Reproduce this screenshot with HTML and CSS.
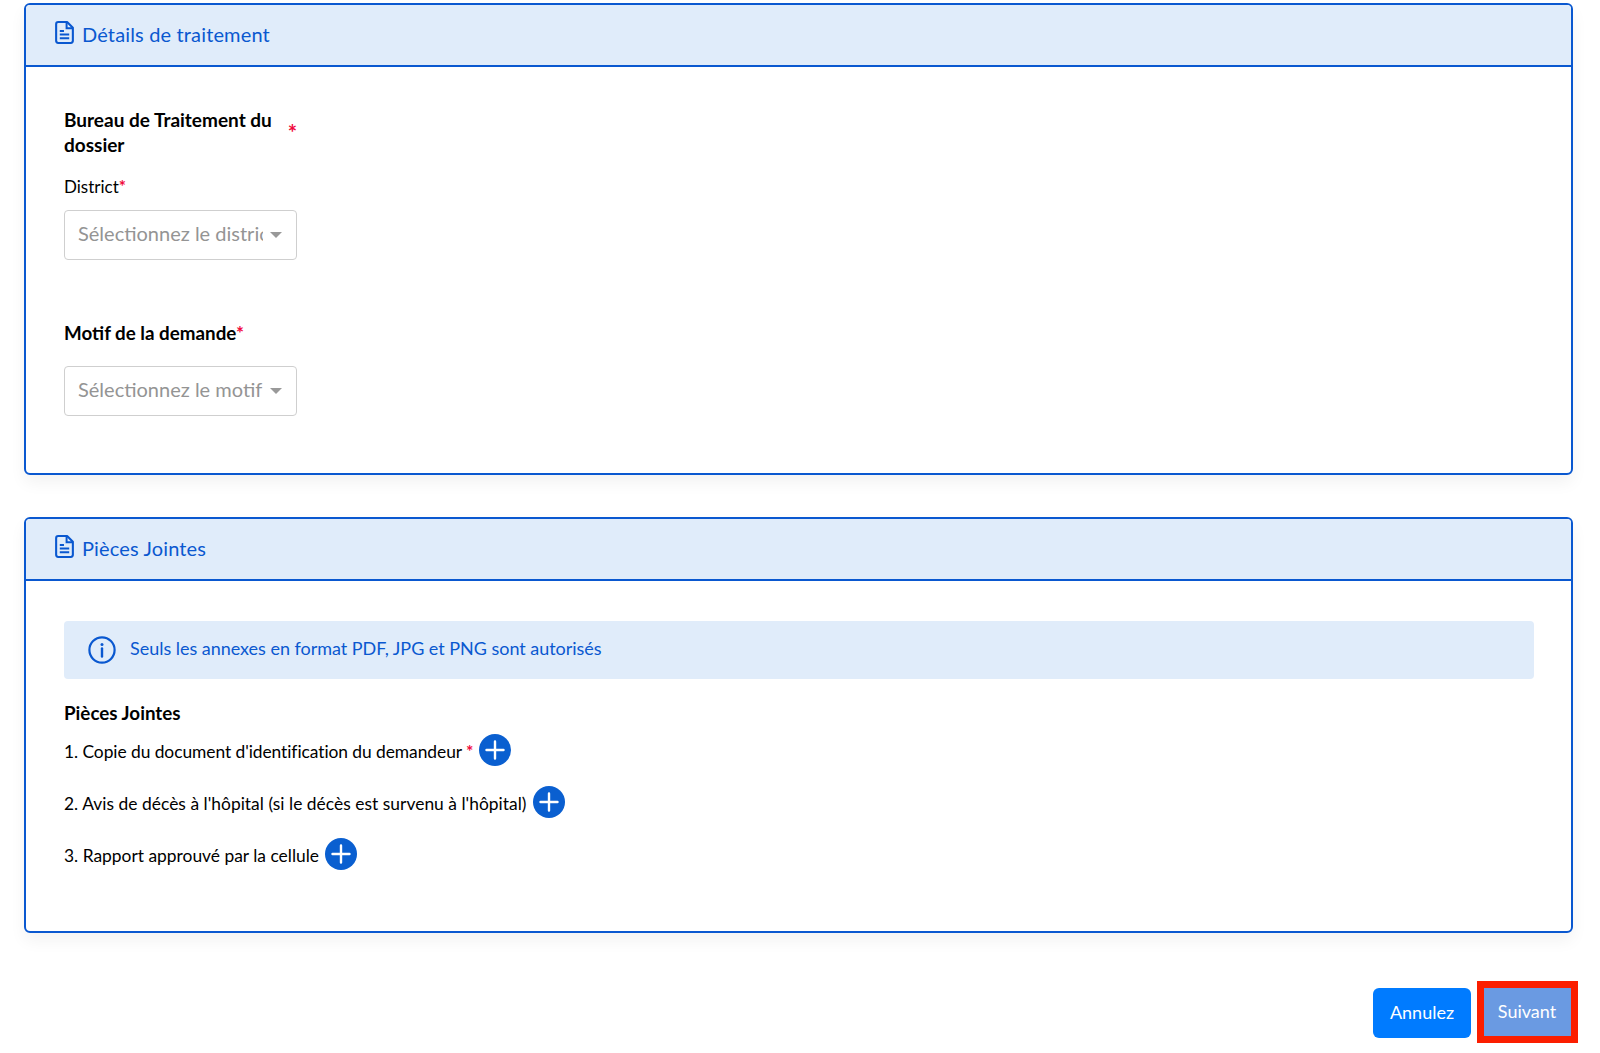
FILE: index.html
```html
<!DOCTYPE html>
<html lang="fr">
<head>
<meta charset="utf-8">
<title>Détails de traitement</title>
<link rel="stylesheet" href="styles.css">
</head>
<body>
<svg class="defs" width="0" height="0" aria-hidden="true">
  <symbol id="doc" viewBox="0 0 18 22">
    <path d="M11.5 1H3a2 2 0 0 0-2 2v16a2 2 0 0 0 2 2h12a2 2 0 0 0 2-2V6.5z" fill="none" stroke="currentColor" stroke-width="2" stroke-linejoin="round"/>
    <path d="M11 1.5V7h5.5M4.5 9.5h4M4.5 13h9M4.5 16.5h9" fill="none" stroke="currentColor" stroke-width="1.9"/>
  </symbol>
  <symbol id="plus" viewBox="0 0 32 32">
    <circle cx="16" cy="16" r="16" fill="#0a5fd0"/>
    <path d="M16 7.5v17M7.5 16h17" stroke="#fff" stroke-width="2.4" stroke-linecap="round"/>
  </symbol>
</svg>
<main class="page">
  <section class="card card-first">
    <header class="card-head">
      <svg class="doc-icon"><use href="#doc"/></svg>
      <h2 class="card-title">Détails de traitement</h2>
    </header>
    <div class="card-body body-first">
      <div class="office-head">
        <div class="office-title">Bureau de Traitement du dossier</div>
        <span class="star office-star">*</span>
      </div>
      <div class="field-label">District<span class="star">*</span></div>
      <div class="select">
        <span class="select-text">Sélectionnez le district</span>
        <span class="caret"></span>
      </div>
      <div class="motif-label">Motif de la demande<span class="star">*</span></div>
      <div class="select">
        <span class="select-text">Sélectionnez le motif</span>
        <span class="caret"></span>
      </div>
    </div>
  </section>

  <section class="card card-second">
    <header class="card-head">
      <svg class="doc-icon"><use href="#doc"/></svg>
      <h2 class="card-title">Pièces Jointes</h2>
    </header>
    <div class="card-body body-second">
      <div class="alert">
        <svg class="info-icon" viewBox="0 0 28 28">
          <circle cx="14" cy="14" r="12.6" fill="none" stroke="currentColor" stroke-width="2.2"/>
          <circle cx="14" cy="8.6" r="1.5" fill="currentColor"/>
          <path d="M14 12.5v8" stroke="currentColor" stroke-width="2.4" stroke-linecap="round"/>
        </svg>
        <span class="alert-text">Seuls les annexes en format PDF, JPG et PNG sont autorisés</span>
      </div>
      <div class="attach-title">Pièces Jointes</div>
      <div class="attach-row row-tight">
        <span>1. Copie du document d'identification du demandeur</span><span class="star row-star">*</span>
        <svg class="plus-icon"><use href="#plus"/></svg>
      </div>
      <div class="attach-row row-loose">
        <span>2. Avis de décès à l'hôpital (si le décès est survenu à l'hôpital)</span>
        <svg class="plus-icon"><use href="#plus"/></svg>
      </div>
      <div class="attach-row">
        <span>3. Rapport approuvé par la cellule</span>
        <svg class="plus-icon"><use href="#plus"/></svg>
      </div>
    </div>
  </section>

  <footer class="actions">
    <button class="btn btn-cancel" type="button">Annulez</button>
    <button class="btn btn-next" type="button">Suivant</button>
  </footer>
</main>
</body>
</html>
```
FILE: styles.css
```css
* { box-sizing: border-box; }
html, body { margin: 0; padding: 0; background: #fff; }
body {
  font-family: "Lato", "Noto Sans", sans-serif;
  color: #000;
  height: 1053px;
  overflow: hidden;
}
.defs { position: absolute; }
.page { padding: 3px 27px 0 24px; }
.card {
  border: 2px solid #0a58d0;
  border-radius: 6px;
  background: #fff;
  box-shadow: 0 8px 16px rgba(0, 0, 0, 0.05);
}
.card-first { height: 472px; }
.card-second { height: 416px; margin-top: 42px; }
.card-head {
  height: 62px;
  display: flex;
  align-items: center;
  gap: 8px;
  padding: 0 0 2px 29px;
  background: #e0ecfa;
  border-bottom: 2px solid #0a58d0;
  border-radius: 4px 4px 0 0;
  color: #0a58d0;
}
.doc-icon { width: 19px; height: 23px; margin-top: -3px; flex: none; }
.card-title { margin: 0; font-size: 20px; font-weight: 400; letter-spacing: 0.15px; }
.card-body { padding: 0 37px 0 38px; }
.body-first { padding-top: 40px; }
.body-second { padding-top: 40px; }
.office-head { display: flex; align-items: center; width: 233px; justify-content: space-between; }
.office-title { width: 215px; font-size: 19px; font-weight: 700; line-height: 25px; }
.office-star { font-weight: 700; font-size: 22px; line-height: 1; margin-top: 1px; margin-right: 0; }
.star { color: #f0093c; font-weight: 700; }
.field-label { margin-top: 18px; font-size: 17px; line-height: 24px; }
.select {
  margin-top: 11px;
  width: 233px;
  height: 50px;
  display: flex;
  align-items: center;
  padding: 0 14px 4px 13px;
  border: 1px solid #cfcfcf;
  border-radius: 4px;
  color: #949494;
  font-size: 20px;
}
.select-text { flex: 1; min-width: 0; overflow: hidden; white-space: nowrap; }
.caret {
  flex: none;
  margin-left: 7px;
  width: 0;
  height: 0;
  margin-top: 4px;
  border-left: 6px solid transparent;
  border-right: 6px solid transparent;
  border-top: 6px solid #999;
}
.motif-label { margin-top: 60px; font-size: 18.8px; font-weight: 700; line-height: 25px; }
.motif-label + .select { margin-top: 21px; }
.alert {
  height: 58px;
  display: flex;
  align-items: center;
  gap: 14px;
  padding: 0 0 0 24px;
  background: #e0ecfa;
  border-radius: 4px;
  color: #0a58d0;
  font-size: 18px;
  letter-spacing: -0.03px;
}
.alert-text { margin-top: -4px; }
.info-icon { width: 28px; height: 28px; flex: none; }
.attach-title { margin-top: 21px; font-size: 18.8px; font-weight: 700; line-height: 25px; }
.attach-row {
  display: flex;
  align-items: center;
  height: 32px;
  margin-top: 20px;
  font-size: 17.4px;
}
.attach-title + .attach-row { margin-top: 10px; }
.row-tight { letter-spacing: -0.06px; }
.row-loose { letter-spacing: 0.03px; }
.row-star { margin-left: 4px; }
.plus-icon { width: 32px; height: 32px; margin-left: 6px; flex: none; margin-top: -2px; }
.actions {
  display: flex;
  justify-content: flex-end;
  align-items: flex-start;
  gap: 13px;
  margin-top: 55px;
  padding-right: 2px;
}
.btn {
  height: 50px;
  border: 0;
  border-radius: 6px;
  color: #fff;
  font-family: inherit;
  font-size: 18px;
  padding: 0 0 2px;
}
.btn-cancel { width: 98px; background: #007bff; }
.btn-next {
  width: 87px;
  height: 48px;
  padding-right: 1px;
  background: #6a9ae2;
  border-radius: 0;
  outline: 7px solid #fb1e00;
}
```
